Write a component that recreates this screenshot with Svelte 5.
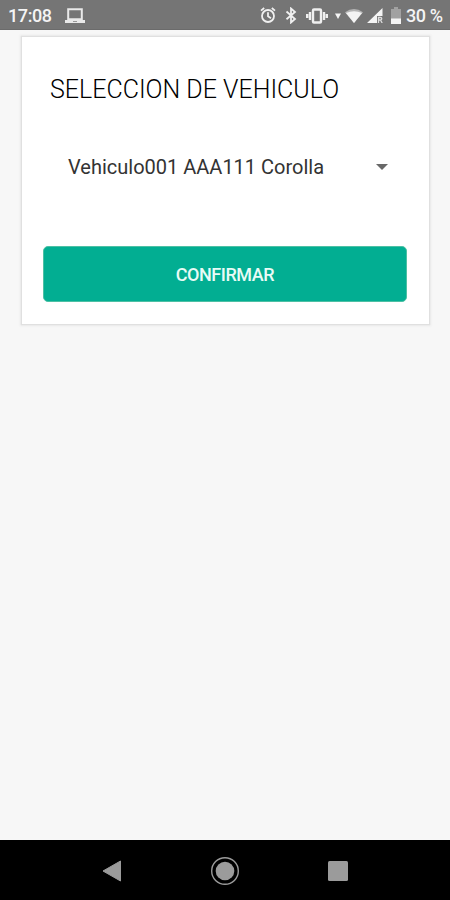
<script lang="ts">
  let vehicle = $state('Vehiculo001 AAA111 Corolla');
</script>

<div class="screen">
  <header class="status">
    <span class="clock">17:08</span>
    <svg class="laptop" width="20" height="16" viewBox="0 0 20 16">
      <path d="M3.2 1.2h13.6v10H3.2z" fill="none" stroke="#e9e9e9" stroke-width="2" />
      <path d="M0 12h20v3H0z" fill="#e9e9e9" />
      <path d="M8 13h4v1H8z" fill="#999" />
    </svg>

    <div class="icons">
      <svg class="alarm" width="16" height="17" viewBox="0 0 16 17">
        <circle cx="8" cy="9" r="6" />
        <path d="M1 3.6 4.2 1M15 3.6 11.8 1M8 5.3V9.2l3 2" />
      </svg>
      <svg class="bluetooth" width="12" height="17" viewBox="0 0 12 17">
        <path d="M1.5 4.5 10 12 6 15.5V1.5L10 5 1.5 12.3" />
      </svg>
      <svg class="vibrate" width="22" height="16" viewBox="0 0 22 16">
        <rect x="7" y="1.5" width="8" height="13" rx="1" />
        <path d="M4 4v8M18 4v8M1.2 6v4M20.8 6v4" />
      </svg>
      <svg class="data" width="6" height="6" viewBox="0 0 6 6">
        <path d="M0 .5h6L3 6z" />
      </svg>
      <svg class="wifi" width="18" height="14" viewBox="0 0 18 14">
        <path d="M0 3.2Q9-3 18 3.2L9 14z" opacity=".5" />
        <path d="M1 4Q9 .3 17 4L9 14z" />
      </svg>
      <svg class="signal" width="16" height="15" viewBox="0 0 16 15">
        <path d="M0 15 15.5 0V8H10v7z" />
        <path d="M11.5 15V9.5h2a1.2 1.2 0 0 1 0 2.5h-2M13.5 12l1.7 3" fill="none" stroke="#ddd" stroke-width="1.3" />
      </svg>
      <svg class="battery" width="10" height="17" viewBox="0 0 10 17">
        <path d="M0 2h3V0h4v2h3v10H0z" opacity=".35" />
        <path d="M0 11.5h10V17H0z" />
      </svg>
      <span class="percent">30 %</span>
    </div>
  </header>

  <main>
    <section class="card">
      <h1>SELECCION DE VEHICULO</h1>
      <div class="picker" role="combobox" aria-expanded="false" aria-controls="vehicles" tabindex="-1">
        <span>{vehicle}</span>
        <svg width="12" height="6" viewBox="0 0 12 6">
          <path d="M0 0h12L6 6z" fill="#686868" />
        </svg>
      </div>
      <button class="confirm">CONFIRMAR</button>
    </section>
  </main>

  <nav>
    <svg width="20" height="22" viewBox="0 0 20 22">
      <path d="M1 11 18.5 1v20z" fill="#9b9b9b" stroke="#9b9b9b" stroke-linejoin="round" />
    </svg>
    <svg width="30" height="30" viewBox="0 0 30 30">
      <circle cx="15" cy="15" r="13.3" fill="none" stroke="#9b9b9b" stroke-width="1.4" />
      <circle cx="15" cy="15" r="9.3" fill="#9b9b9b" />
    </svg>
    <svg width="20" height="20" viewBox="0 0 20 20">
      <rect width="20" height="20" rx="1.5" fill="#9b9b9b" />
    </svg>
  </nav>
</div>

<style>
  :global(body) {
    margin: 0;
  }
  .screen {
    width: 450px;
    height: 900px;
    display: flex;
    flex-direction: column;
    background: #f7f7f7;
    font-family: Roboto, sans-serif;
    overflow: hidden;
  }
  svg {
    display: block;
    flex: none;
  }
  .status {
    height: 30px;
    box-sizing: border-box;
    flex: none;
    display: flex;
    align-items: center;
    padding: 2px 7px 0 8px;
    background: #757575;
    border-bottom: 1px solid #6b6b6b;
    color: #f4f4f4;
    font-size: 18px;
    font-weight: 500;
    letter-spacing: -0.4px;
    white-space: nowrap;
  }
  .clock {
    width: 57px;
  }
  .icons {
    margin-left: auto;
    display: flex;
    align-items: center;
    fill: #f4f4f4;
  }
  .alarm,
  .bluetooth,
  .vibrate {
    fill: none;
    stroke: #f0f0f0;
    stroke-width: 1.8;
  }
  .alarm {
    margin-right: 9px;
  }
  .bluetooth {
    margin-right: 9px;
  }
  .vibrate {
    margin-right: 7px;
    stroke-width: 2.4;
  }
  .data {
    margin-right: 4px;
  }
  .wifi {
    margin-right: 4px;
  }
  .signal {
    margin-right: 8px;
  }
  .battery {
    margin-right: 5px;
  }
  .percent {
    width: 37px;
  }
  main {
    flex: 1;
    padding: 7px 21px 0 22px;
  }
  .card {
    height: 287px;
    box-sizing: border-box;
    padding: 39px 22px 0 21px;
    background: #fff;
    box-shadow: 0 0 1px 1px #e0e0e0, 0 0 2px 2px #ebebeb;
  }
  h1 {
    margin: 0 0 0 7px;
    font-size: 25px;
    font-weight: 300;
    line-height: 28px;
    color: #000;
    white-space: nowrap;
  }
  .picker {
    display: flex;
    align-items: center;
    justify-content: space-between;
    height: 40px;
    margin: 43px 19px 0 25px;
    font-size: 20px;
    color: #333;
    white-space: nowrap;
  }
  .confirm {
    display: block;
    width: 100%;
    height: 56px;
    margin-top: 59px;
    padding: 0;
    border: 1px solid #4dc0a4;
    border-radius: 5px;
    background: #02ae92;
    color: #e9fbf6;
    font-family: inherit;
    font-size: 18px;
    font-weight: 500;
    letter-spacing: -0.45px;
  }
  nav {
    height: 60px;
    box-sizing: border-box;
    flex: none;
    display: flex;
    align-items: center;
    justify-content: space-between;
    padding: 1px 102px 0;
    background: #000;
  }
</style>
